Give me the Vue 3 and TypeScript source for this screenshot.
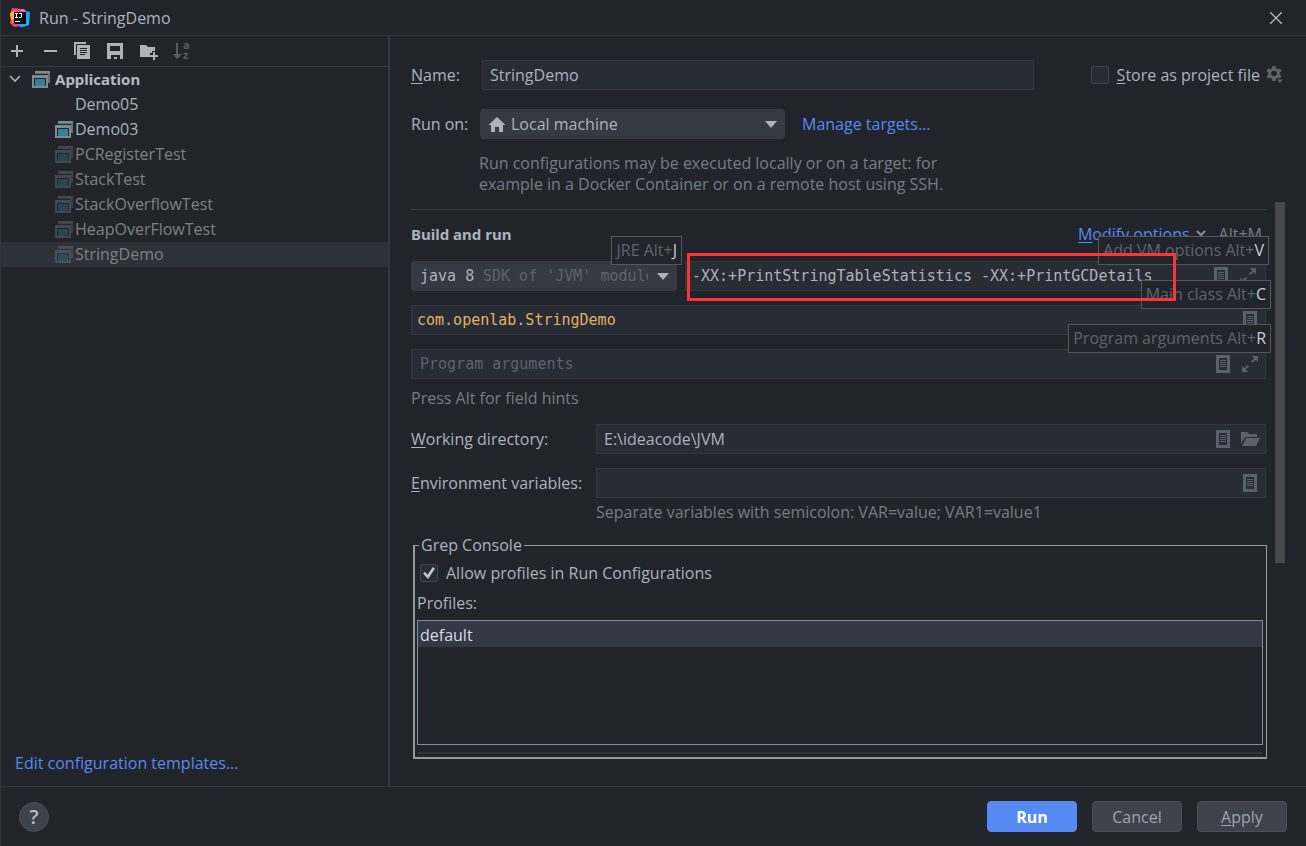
<script setup lang="ts">
import { ref } from 'vue'

interface ConfigItem {
  name: string
  icon: boolean
  temporary: boolean
}

const configs: ConfigItem[] = [
  { name: 'Demo05', icon: false, temporary: false },
  { name: 'Demo03', icon: true, temporary: false },
  { name: 'PCRegisterTest', icon: true, temporary: true },
  { name: 'StackTest', icon: true, temporary: true },
  { name: 'StackOverflowTest', icon: true, temporary: true },
  { name: 'HeapOverFlowTest', icon: true, temporary: true },
  { name: 'StringDemo', icon: true, temporary: true },
]

const selected = ref('StringDemo')
const name = ref('StringDemo')
const storeAsFile = ref(false)
const vmOptions = ref('-XX:+PrintStringTableStatistics -XX:+PrintGCDetails')
const mainClass = ref('com.openlab.StringDemo')
const programArgs = ref('')
const workingDir = ref('E:\\ideacode\\JVM')
const envVars = ref('')
const allowProfiles = ref(true)
</script>

<template>
  <div class="dialog">
    <svg class="defs" width="0" height="0" aria-hidden="true">
      <defs>
        <linearGradient id="logo-left" x1="0" y1="0" x2="0" y2="1">
          <stop offset="0" stop-color="#ff318c" />
          <stop offset="0.5" stop-color="#fe7d2f" />
          <stop offset="1" stop-color="#f0309a" />
        </linearGradient>
        <linearGradient id="logo-right" x1="0" y1="0" x2="1" y2="1">
          <stop offset="0" stop-color="#2b7bf5" />
          <stop offset="1" stop-color="#12c2ff" />
        </linearGradient>
        <symbol id="app-icon" viewBox="0 0 18 17">
          <path d="M3 0H18V12H16V3H3Z" fill="#7f8b91" opacity="0.75" />
          <path d="M3 0H18V2H3Z" fill="#7f8b91" />
          <path d="M0 4H16V17H0ZM2 7V15H14V7Z" fill="#7f8b91" fill-rule="evenodd" />
          <rect x="3" y="8" width="10" height="7" fill="#33829c" />
        </symbol>
        <symbol id="doc-icon" viewBox="0 0 14 18">
          <path d="M0 0H14V18H0ZM3 3V15H11V3Z" fill="#59626b" fill-rule="evenodd" />
          <path d="M4 5H10V6H4ZM4 7H10V8H4ZM4 9H10V10H4ZM4 11H10V12H4Z" fill="#59626b" />
        </symbol>
        <symbol id="expand-icon" viewBox="0 0 16 16">
          <path d="M10 0H16V6L13.700 3.700L10.500 7L9 5.500L12.300 2.300ZM6 16H0V10L2.300 12.300L5.500 9L7 10.500L3.700 13.700Z" fill="#59626b" />
        </symbol>
      </defs>
    </svg>

    <header class="titlebar">
      <svg class="logo" width="20" height="20" viewBox="0 0 20 20" aria-hidden="true">
        <path d="M2 0L12 1L11 18L4 19L0 15L1 11L0 7Z" fill="url(#logo-left)" />
        <path d="M0 5L4 3L5 10L1 12Z" fill="#ffb52e" />
        <path d="M11 1L14 1L16 3L20 4L19 17L13 19L10 19L8 16Z" fill="url(#logo-right)" />
        <path d="M11 1H14L16 4H11Z" fill="#f765c8" />
        <rect x="4" y="4" width="12" height="12" fill="#0b0508" />
        <path d="M5 5H8V6H7V9H8V10H5V9H6V6H5ZM9 5H12V9L11 10H9V9H11V6H9ZM5 13H10V14H5Z" fill="#fff" />
      </svg>
      <h1>Run - StringDemo</h1>
      <button type="button" class="icon-button close" aria-label="Close">
        <svg width="12" height="12" viewBox="0 0 12 12"><path d="M0 0L12 12M12 0L0 12" stroke="#b4b7bc" stroke-width="1.300" /></svg>
      </button>
    </header>

    <div class="body">
      <aside class="sidebar">
        <div class="toolbar">
          <button type="button" class="icon-button" aria-label="Add">
            <svg width="18" height="18" viewBox="0 0 18 18"><path d="M8 3H10V8H15V10H10V15H8V10H3V8H8Z" fill="#afb1b3" /></svg>
          </button>
          <button type="button" class="icon-button" aria-label="Remove">
            <svg width="18" height="18" viewBox="0 0 18 18"><path d="M3 8H16V10H3Z" fill="#afb1b3" /></svg>
          </button>
          <button type="button" class="icon-button" aria-label="Copy">
            <svg width="18" height="18" viewBox="0 0 18 18"><path d="M0 0H12V2H2V13H0Z" fill="#afb1b3" /><path d="M3 3H16V17H3ZM6 6V7H13V6ZM6 8V9H13V8ZM6 10V11H13V10ZM6 12V13H11V12Z" fill="#afb1b3" fill-rule="evenodd" /></svg>
          </button>
          <button type="button" class="icon-button" aria-label="Save">
            <svg width="18" height="18" viewBox="0 0 18 18"><path d="M0 1H16V17H13V13H4V17H0ZM3 4V9H13V4ZM7 15H10V17H7Z" fill="#afb1b3" fill-rule="evenodd" /></svg>
          </button>
          <button type="button" class="icon-button" aria-label="New folder">
            <svg width="18" height="18" viewBox="0 0 18 18"><path d="M0 3H6L8 5H15V9H12V11H10V15H0Z" fill="#afb1b3" /><path d="M13 10H15V13H18V15H15V18H13V15H10V13H13Z" fill="#afb1b3" /></svg>
          </button>
          <button type="button" class="icon-button sort" aria-label="Sort" disabled>
            <svg width="18" height="18" viewBox="0 0 18 18">
              <path d="M3 1H5V12H9L4 17L0 12H3Z" fill="#5a5d62" />
              <text x="10" y="7" class="glyph">a</text>
              <text x="10" y="17" class="glyph">z</text>
            </svg>
          </button>
        </div>
        <ul class="tree">
          <li class="row group">
            <svg class="chevron" width="12" height="8" viewBox="0 0 12 8" aria-hidden="true"><path d="M1 1L6 6L11 1" fill="none" stroke="#afb1b3" stroke-width="1.600" /></svg>
            <svg width="18" height="17" aria-hidden="true"><use href="#app-icon" /></svg>
            <span class="bold">Application</span>
          </li>
          <li
            v-for="item in configs"
            :key="item.name"
            class="row leaf"
            :class="{ temporary: item.temporary, selected: item.name === selected }"
            @click="selected = item.name"
          >
            <span class="leaf-icon"><svg v-if="item.icon" width="18" height="17" aria-hidden="true"><use href="#app-icon" /></svg></span>
            <span>{{ item.name }}</span>
          </li>
        </ul>
        <a class="link templates" href="#">Edit configuration templates...</a>
      </aside>

      <main class="settings">
        <div class="name-row">
          <label for="cfg-name"><u>N</u>ame:</label>
          <div class="field name-field"><input id="cfg-name" v-model="name" type="text" /></div>
          <div class="store">
            <input id="store" v-model="storeAsFile" type="checkbox" />
            <label for="store"><u>S</u>tore as project file</label>
            <button type="button" class="icon-button" aria-label="Storage options">
              <svg width="18" height="18" viewBox="0 0 18 18">
                <path d="M6.500 0H9.500L10 2.300L11.600 3.200L14 2.400L15.500 5L13.700 6.700V8.300L15.500 10L14 12.600L11.600 11.800L10 12.700L9.500 15H6.500L6 12.700L4.400 11.800L2 12.600L0.500 10L2.300 8.300V6.700L0.500 5L2 2.400L4.400 3.200L6 2.300ZM8 4.700A2.800 2.800 0 1 0 8 10.300A2.800 2.800 0 1 0 8 4.700Z" fill="#606367" fill-rule="evenodd" />
                <path d="M10 13H18L14 17.500Z" fill="#606367" stroke="#21252b" />
              </svg>
            </button>
          </div>
        </div>

        <div class="target-row">
          <label for="run-on">Run on:</label>
          <div class="combo target">
            <svg class="home" width="18" height="15" viewBox="0 0 18 15" aria-hidden="true"><path d="M9 0L17.500 8H15V15H11V10H7V15H3V8H0.500Z" fill="#afb1b3" /></svg>
            <select id="run-on"><option>Local machine</option></select>
            <svg class="arrow" width="12" height="7" viewBox="0 0 12 7" aria-hidden="true"><path d="M0 0H12L6 7Z" fill="#abb2bf" /></svg>
          </div>
          <a class="link" href="#">Manage targets...</a>
        </div>
        <p class="hint target-hint">Run configurations may be executed locally or on a target: for<br />example in a Docker Container or on a remote host using SSH.</p>

        <div class="scroll">
          <div class="content">
            <div class="section-head">
              <h2 class="bold">Build and run</h2>
              <a class="link modify" href="#"><u>M</u>odify options</a>
              <svg width="12" height="8" viewBox="0 0 12 8" aria-hidden="true"><path d="M2 1L6 5L10 1" fill="none" stroke="#8b9098" stroke-width="2" /></svg>
              <span class="shortcut">Alt+M</span>
            </div>

            <div class="run-grid">
              <div class="pair">
                <div class="hinted">
                  <div class="combo jre mono">
                    <select id="jre" aria-label="JRE"><option>java 8</option></select>
                    <span class="sdk">SDK of 'JVM' module</span>
                    <svg class="arrow" width="12" height="7" viewBox="0 0 12 7" aria-hidden="true"><path d="M0 0H12L6 7Z" fill="#abb2bf" /></svg>
                  </div>
                  <span class="tip">JRE Alt+<b>J</b></span>
                </div>
                <div class="hinted">
                  <div class="field mono vm">
                    <input v-model="vmOptions" type="text" aria-label="VM options" />
                    <button type="button" class="icon-button" aria-label="Insert macro"><svg width="14" height="18"><use href="#doc-icon" /></svg></button>
                    <button type="button" class="icon-button" aria-label="Expand"><svg width="16" height="16"><use href="#expand-icon" /></svg></button>
                  </div>
                  <span class="tip vm-tip">Add VM options Alt+<b>V</b></span>
                  <span class="marker"></span>
                </div>
              </div>
              <div class="hinted">
                <div class="field mono main-class">
                  <input v-model="mainClass" type="text" aria-label="Main class" />
                  <button type="button" class="icon-button" aria-label="Browse class"><svg width="14" height="18"><use href="#doc-icon" /></svg></button>
                </div>
                <span class="tip">Main class Alt+<b>C</b></span>
              </div>
              <div class="hinted">
                <div class="field mono">
                  <input v-model="programArgs" type="text" placeholder="Program arguments" aria-label="Program arguments" />
                  <button type="button" class="icon-button" aria-label="Insert macro"><svg width="14" height="18"><use href="#doc-icon" /></svg></button>
                  <button type="button" class="icon-button" aria-label="Expand"><svg width="16" height="16"><use href="#expand-icon" /></svg></button>
                </div>
                <span class="tip">Program arguments Alt+<b>R</b></span>
              </div>
            </div>
            <p class="hint alt-hint">Press Alt for field hints</p>

            <div class="form-grid">
              <label for="work-dir"><u>W</u>orking directory:</label>
              <div class="field">
                <input id="work-dir" v-model="workingDir" type="text" />
                <button type="button" class="icon-button" aria-label="Insert macro"><svg width="14" height="18"><use href="#doc-icon" /></svg></button>
                <button type="button" class="icon-button folder" aria-label="Browse">
                  <svg width="19" height="15" viewBox="0 0 19 15"><path d="M0 0H6L8 2H16V5H4L0 12Z" fill="#59626b" /><path d="M5 6H19L15 14H1Z" fill="#59626b" /></svg>
                </button>
              </div>
              <label for="env"><u>E</u>nvironment variables:</label>
              <div class="field">
                <input id="env" v-model="envVars" type="text" />
                <button type="button" class="icon-button" aria-label="Edit variables"><svg width="14" height="18"><use href="#doc-icon" /></svg></button>
              </div>
            </div>
            <p class="hint env-hint">Separate variables with semicolon: VAR=value; VAR1=value1</p>

            <fieldset class="grep">
              <legend>Grep Console</legend>
              <div class="allow">
                <input id="allow" v-model="allowProfiles" type="checkbox" />
                <label for="allow">Allow profiles in Run Configurations</label>
              </div>
              <p class="profiles-label">Profiles:</p>
              <ul class="profiles"><li>default</li></ul>
              <div class="track"></div>
            </fieldset>
          </div>
          <div class="scrollbar"></div>
        </div>
      </main>
    </div>

    <footer class="footer">
      <button type="button" class="help" aria-label="Help">?</button>
      <button type="button" class="button primary">Run</button>
      <button type="button" class="button">Cancel</button>
      <button type="button" class="button"><u>A</u>pply</button>
    </footer>
  </div>
</template>

<style>
html,
body {
  background: #21252b;
}
</style>

<style scoped>
.dialog,
.dialog * {
  box-sizing: border-box;
}
.dialog {
  display: flex;
  flex-direction: column;
  min-height: 100vh;
  background: #21252b;
  border-left: 1px solid #30343b;
  color: #abb2bf;
  font: 16px/20px 'Open Sans', 'Noto Sans', sans-serif;
}
.defs {
  position: absolute;
}
h1,
h2,
p,
ul {
  margin: 0;
  padding: 0;
  font-size: 16px;
  list-style: none;
}
.bold {
  font: bold 15px/20px 'Noto Sans', sans-serif;
}
svg {
  display: block;
  flex: none;
}
u {
  text-underline-offset: 2px;
}
input,
select,
button {
  font: inherit;
  color: inherit;
}
.icon-button {
  display: flex;
  align-items: center;
  justify-content: center;
  padding: 0;
  border: 0;
  background: none;
}
.link {
  color: #568af2;
  text-decoration: none;
}
.hint {
  color: #767c87;
}
.mono {
  font-family: 'DejaVu Sans Mono', 'Liberation Mono', monospace;
  font-size: 15px;
}

.titlebar {
  display: flex;
  align-items: center;
  height: 36px;
  padding: 0 24px 0 9px;
  border-bottom: 1px solid #333841;
}
.titlebar h1 {
  margin-left: 9px;
  font-weight: 400;
}
.close {
  margin-left: auto;
}

.body {
  display: flex;
  flex: 1;
}
.sidebar {
  display: flex;
  flex: 0 0 389px;
  flex-direction: column;
  border-right: 2px solid #333841;
}
.toolbar {
  display: flex;
  gap: 15px;
  height: 31px;
  padding-left: 7px;
  border-bottom: 1px solid #333841;
}
.sort svg {
  overflow: visible;
}
.glyph {
  font: bold 11px 'Noto Sans', sans-serif;
  fill: #5a5d62;
}
.row {
  display: flex;
  align-items: center;
  height: 25px;
  padding-bottom: 1px;
}
.group {
  gap: 5px;
  padding-left: 8px;
  color: #b4bac5;
}
.group .chevron {
  margin-right: 6px;
}
.leaf {
  gap: 2px;
  padding-left: 54px;
}
.leaf-icon {
  width: 18px;
}
.temporary {
  color: #808080;
}
.temporary .leaf-icon {
  opacity: 0.35;
}
.selected {
  background: #2c313a;
}
.templates {
  margin: auto auto 13px 14px;
}

.settings {
  display: flex;
  flex: 1;
  flex-direction: column;
  min-width: 0;
  padding: 24px 21px 27px 21px;
}
.name-row,
.target-row,
.store {
  display: flex;
  align-items: center;
}
.name-row > label {
  flex: 0 0 71px;
}
.name-field {
  flex: 1;
}
.store {
  margin: 0 1px 0 57px;
}
.store label {
  margin: 0 6px 0 8px;
}
.field {
  display: flex;
  align-items: center;
  height: 30px;
  padding-right: 7px;
  border: 1px solid #333841;
  background: #282c34;
}
.field input {
  flex: 1;
  width: 100%;
  min-width: 0;
  height: 28px;
  padding: 0 7px 1px;
  border: 0;
  outline: 0;
  background: none;
}
.field.mono input {
  padding: 0 8px;
}
.field.vm input {
  padding: 0 6px;
}
.field.vm {
  padding-right: 9px;
}
.field .icon-button {
  width: 16px;
}
.field .icon-button + .icon-button {
  margin-left: 11px;
}
.field input::placeholder {
  color: #5c6370;
  opacity: 1;
}
.combo {
  display: grid;
  align-items: center;
  height: 30px;
  border-radius: 4px;
  background: #353941;
}
.combo > * {
  grid-row: 1;
  grid-column: 1;
}
.combo select {
  width: 100%;
  height: 30px;
  border: 0;
  outline: 0;
  appearance: none;
  background: none;
}
.combo .arrow {
  justify-self: end;
  margin-right: 8px;
  pointer-events: none;
}
.target-row {
  margin-top: 19px;
}
.target-row > label {
  flex: 0 0 69px;
}
.target {
  flex: 0 0 305px;
  margin-right: 17px;
}
.target .home {
  margin-left: 8px;
}
.target select {
  padding: 0 0 1px 31px;
}
.target-hint {
  margin: 14px 0 0 68px;
  line-height: 21px;
}

.scroll {
  display: flex;
  align-items: flex-start;
  gap: 4px;
  margin-top: 7px;
}
.content {
  flex: 1;
  min-width: 0;
  padding: 7px 5px 0 0;
}
.scrollbar {
  width: 10px;
  height: 361px;
  background: #47494d;
}
.section-head {
  display: flex;
  align-items: center;
  height: 52px;
  padding: 0 4px 4px 0;
  border-top: 1px solid #333841;
}
.section-head h2 {
  margin-right: auto;
}
.modify {
  margin-right: 5px;
}
.shortcut {
  margin-left: 12px;
  color: #767c87;
}
.run-grid {
  display: grid;
  gap: 14px;
}
.pair {
  display: grid;
  grid-template-columns: 266px 1fr;
  gap: 8px;
}
.hinted {
  position: relative;
}
.jre select {
  padding-left: 9px;
}
.jre .sdk {
  overflow: hidden;
  margin: 0 29px 0 72px;
  color: #5c6370;
  white-space: nowrap;
  pointer-events: none;
}
.main-class {
  color: #e0b068;
}
.field.main-class input {
  padding-left: 5px;
}
.tip {
  position: absolute;
  z-index: 1;
  right: -5px;
  bottom: 26px;
  padding: 4px;
  border: 1px solid #55585b;
  background: #21252b;
  color: #5c6370;
  line-height: 19px;
  white-space: nowrap;
}
.vm-tip {
  right: -3px;
}
.tip b {
  color: #c8cdd6;
  font-weight: 400;
}
.marker {
  position: absolute;
  z-index: 3;
  top: -8px;
  left: 2px;
  width: 489px;
  height: 48px;
  border: 3px solid #ff3535;
  pointer-events: none;
}
.alt-hint {
  margin-top: 9px;
}
.form-grid {
  display: grid;
  grid-template-columns: 185px 1fr;
  align-items: center;
  row-gap: 14px;
  margin-top: 16px;
}
.env-hint {
  margin: 4px 0 0 185px;
}
.grep {
  min-width: 0;
  margin: 13px -1px 0 2px;
  padding: 8px 3px 3px 2px;
  border: solid #999;
  border-width: 1px 1px 2px 2px;
}
.grep legend {
  margin-left: 2px;
  padding: 0 2px;
}
.allow {
  display: flex;
  align-items: center;
  gap: 8px;
  margin-left: 3px;
}
.profiles-label {
  margin: 10px 0 7px;
}
.profiles {
  min-height: 125px;
  border: 1px solid #7f909b;
}
.profiles li {
  padding: 4px 2px 2px;
  background: #323844;
  color: #d7dae0;
}
.track {
  height: 2px;
  margin-top: 7px;
  background: #30343c;
}
input[type='checkbox'] {
  display: grid;
  place-content: center;
  width: 18px;
  height: 18px;
  margin: 0;
  border: 1px solid #414855;
  border-radius: 2px;
  appearance: none;
  background: #282c34;
}
input[type='checkbox']:checked::before {
  width: 12px;
  height: 12px;
  background: #c0c5ce;
  clip-path: polygon(0 55%, 16% 40%, 38% 65%, 82% 0, 100% 12%, 42% 100%);
  content: '';
}

.footer {
  display: flex;
  align-items: center;
  gap: 15px;
  height: 60px;
  padding: 0 19px 0 18px;
  border-top: 1px solid #333841;
}
.help {
  width: 30px;
  height: 30px;
  margin-right: auto;
  padding: 0;
  border: 1px solid #4a4f58;
  border-radius: 50%;
  background: #3d424b;
  color: #b9bcc0;
  font-size: 20px;
  font-weight: 600;
}
.button {
  width: 90px;
  height: 31px;
  padding: 0;
  border: 1px solid #4a4f58;
  border-radius: 4px;
  background: #3d424b;
  color: #9da5b4;
}
.primary {
  border-color: #568af2;
  background: #568af2;
  color: #fff;
  font-weight: 700;
}
</style>
